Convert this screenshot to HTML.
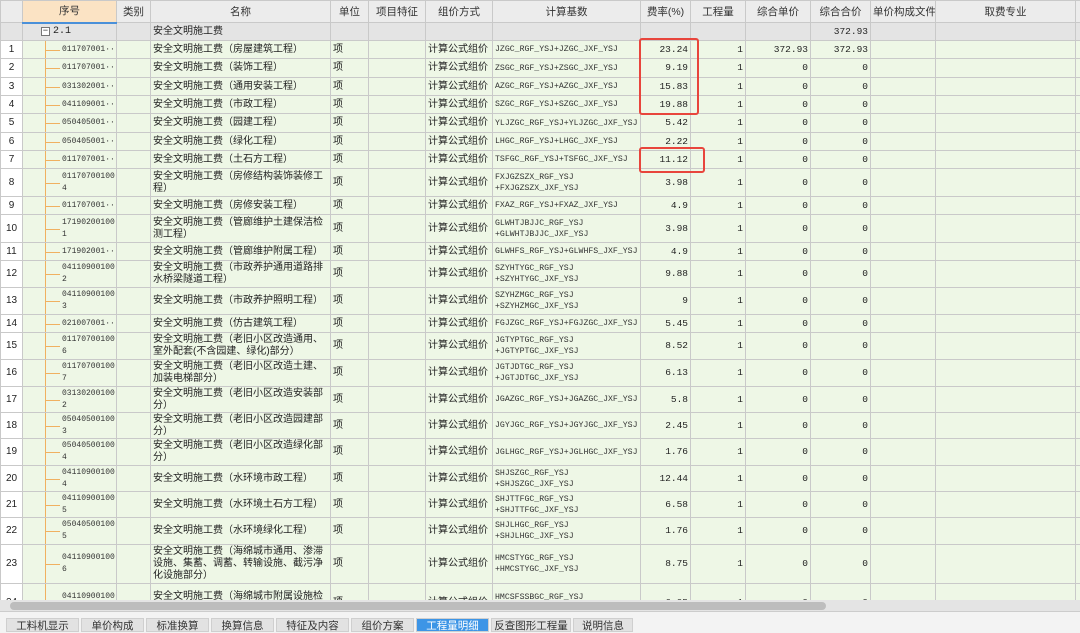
<!DOCTYPE html>
<html><head><meta charset="utf-8"><style>
*{margin:0;padding:0;box-sizing:border-box}
body{width:1080px;height:629px;overflow:hidden;background:#f3f3f3;font-family:"Liberation Sans","Noto Sans CJK SC",sans-serif;font-size:10px;color:#222;position:relative}
#grid{position:absolute;left:0;top:0;width:1080px;height:600px;overflow:hidden;background:#fff}
table{border-collapse:collapse;table-layout:fixed;width:1080px}
td{border:1px solid #c9c9c9;padding:0 2px;line-height:12px;vertical-align:middle;overflow:hidden;white-space:nowrap;background:#eef7e6;font-size:10px}
tr.h td{background:#ececec;text-align:center;height:22px;font-size:10.5px;color:#333}
tr.h td.sx{background:#fbe3c4;border-bottom:2px solid #4a90d9}
tr.g td{background:#e4e4e4;height:18px}
td.n{background:#fff;text-align:center;font-size:10px;padding:0}
td.c{font-family:"Liberation Mono",monospace;font-size:8px;position:relative;padding-left:39px;padding-right:0;color:#333;word-break:break-all}
td.c:before{content:"";position:absolute;left:22px;top:-2px;bottom:-2px;border-left:1px solid #f0b060}
td.c:after{content:"";position:absolute;left:23px;width:14px;top:50%;border-top:1px solid #f0b060}
td.w{white-space:normal}
td.f{font-family:"Liberation Mono",monospace;font-size:8.2px;white-space:normal;line-height:11px;color:#333}
td.r{text-align:right;font-family:"Liberation Mono",monospace;font-size:9.5px}
.box{position:absolute;border:2px solid #e8453c;border-radius:3px}
#sb{position:absolute;left:0;top:600px;width:1080px;height:12px;background:#e4e4e4;border-bottom:1px solid #ccc}
#sb div{position:absolute;left:10px;top:2px;width:816px;height:8px;background:#bdbdbd;border-radius:4px}
.tab{position:absolute;top:618px;height:14px;background:#e2e2e2;border:1px solid #cfcfcf;font-size:10.5px;text-align:center;line-height:14px;color:#333}
</style></head><body>
<div id="grid"><table>
<colgroup><col style="width:22px"><col style="width:94px"><col style="width:34px"><col style="width:180px"><col style="width:38px"><col style="width:57px"><col style="width:67px"><col style="width:148px"><col style="width:50px"><col style="width:55px"><col style="width:65px"><col style="width:60px"><col style="width:65px"><col style="width:140px"><col style="width:5px"></colgroup>
<tr class="h"><td></td><td class="sx">序号</td><td>类别</td><td>名称</td><td>单位</td><td>项目特征</td><td>组价方式</td><td>计算基数</td><td>费率(%)</td><td>工程量</td><td>综合单价</td><td>综合合价</td><td>单价构成文件</td><td>取费专业</td><td></td></tr>
<tr class="g"><td class="n"></td><td style="padding-left:18px;font-family:'Liberation Mono',monospace;font-size:10px"><span style="display:inline-block;width:9px;height:9px;border:1px solid #777;font-size:9px;line-height:6px;text-align:center;margin-right:3px;background:#fff">−</span>2.1</td><td></td><td>安全文明施工费</td><td></td><td></td><td></td><td></td><td></td><td></td><td></td><td class="r">372.93</td><td></td><td></td><td></td></tr>
<tr style="height:18px"><td class="n">1</td><td class="c">011707001···</td><td></td><td>安全文明施工费（房屋建筑工程）</td><td>项</td><td></td><td>计算公式组价</td><td class="f">JZGC_RGF_YSJ+JZGC_JXF_YSJ</td><td class="r">23.24</td><td class="r">1</td><td class="r">372.93</td><td class="r">372.93</td><td></td><td></td><td></td></tr>
<tr style="height:19px"><td class="n">2</td><td class="c">011707001···</td><td></td><td>安全文明施工费（装饰工程）</td><td>项</td><td></td><td>计算公式组价</td><td class="f">ZSGC_RGF_YSJ+ZSGC_JXF_YSJ</td><td class="r">9.19</td><td class="r">1</td><td class="r">0</td><td class="r">0</td><td></td><td></td><td></td></tr>
<tr style="height:18px"><td class="n">3</td><td class="c">031302001···</td><td></td><td>安全文明施工费（通用安装工程）</td><td>项</td><td></td><td>计算公式组价</td><td class="f">AZGC_RGF_YSJ+AZGC_JXF_YSJ</td><td class="r">15.83</td><td class="r">1</td><td class="r">0</td><td class="r">0</td><td></td><td></td><td></td></tr>
<tr style="height:18px"><td class="n">4</td><td class="c">041109001···</td><td></td><td>安全文明施工费（市政工程）</td><td>项</td><td></td><td>计算公式组价</td><td class="f">SZGC_RGF_YSJ+SZGC_JXF_YSJ</td><td class="r">19.88</td><td class="r">1</td><td class="r">0</td><td class="r">0</td><td></td><td></td><td></td></tr>
<tr style="height:19px"><td class="n">5</td><td class="c">050405001···</td><td></td><td>安全文明施工费（园建工程）</td><td>项</td><td></td><td>计算公式组价</td><td class="f">YLJZGC_RGF_YSJ+YLJZGC_JXF_YSJ</td><td class="r">5.42</td><td class="r">1</td><td class="r">0</td><td class="r">0</td><td></td><td></td><td></td></tr>
<tr style="height:18px"><td class="n">6</td><td class="c">050405001···</td><td></td><td>安全文明施工费（绿化工程）</td><td>项</td><td></td><td>计算公式组价</td><td class="f">LHGC_RGF_YSJ+LHGC_JXF_YSJ</td><td class="r">2.22</td><td class="r">1</td><td class="r">0</td><td class="r">0</td><td></td><td></td><td></td></tr>
<tr style="height:18px"><td class="n">7</td><td class="c">011707001···</td><td></td><td>安全文明施工费（土石方工程）</td><td>项</td><td></td><td>计算公式组价</td><td class="f">TSFGC_RGF_YSJ+TSFGC_JXF_YSJ</td><td class="r">11.12</td><td class="r">1</td><td class="r">0</td><td class="r">0</td><td></td><td></td><td></td></tr>
<tr style="height:28px"><td class="n">8</td><td class="c w">011707001004</td><td></td><td class="w">安全文明施工费（房修结构装饰装修工程）</td><td>项</td><td></td><td>计算公式组价</td><td class="f">FXJGZSZX_RGF_YSJ +FXJGZSZX_JXF_YSJ</td><td class="r">3.98</td><td class="r">1</td><td class="r">0</td><td class="r">0</td><td></td><td></td><td></td></tr>
<tr style="height:18px"><td class="n">9</td><td class="c">011707001···</td><td></td><td>安全文明施工费（房修安装工程）</td><td>项</td><td></td><td>计算公式组价</td><td class="f">FXAZ_RGF_YSJ+FXAZ_JXF_YSJ</td><td class="r">4.9</td><td class="r">1</td><td class="r">0</td><td class="r">0</td><td></td><td></td><td></td></tr>
<tr style="height:28px"><td class="n">10</td><td class="c w">171902001001</td><td></td><td class="w">安全文明施工费（管廊维护土建保洁检测工程）</td><td>项</td><td></td><td>计算公式组价</td><td class="f">GLWHTJBJJC_RGF_YSJ +GLWHTJBJJC_JXF_YSJ</td><td class="r">3.98</td><td class="r">1</td><td class="r">0</td><td class="r">0</td><td></td><td></td><td></td></tr>
<tr style="height:18px"><td class="n">11</td><td class="c">171902001···</td><td></td><td>安全文明施工费（管廊维护附属工程）</td><td>项</td><td></td><td>计算公式组价</td><td class="f">GLWHFS_RGF_YSJ+GLWHFS_JXF_YSJ</td><td class="r">4.9</td><td class="r">1</td><td class="r">0</td><td class="r">0</td><td></td><td></td><td></td></tr>
<tr style="height:27px"><td class="n">12</td><td class="c w">041109001002</td><td></td><td class="w">安全文明施工费（市政养护通用道路排水桥梁隧道工程）</td><td>项</td><td></td><td>计算公式组价</td><td class="f">SZYHTYGC_RGF_YSJ +SZYHTYGC_JXF_YSJ</td><td class="r">9.88</td><td class="r">1</td><td class="r">0</td><td class="r">0</td><td></td><td></td><td></td></tr>
<tr style="height:27px"><td class="n">13</td><td class="c w">041109001003</td><td></td><td class="w">安全文明施工费（市政养护照明工程）</td><td>项</td><td></td><td>计算公式组价</td><td class="f">SZYHZMGC_RGF_YSJ +SZYHZMGC_JXF_YSJ</td><td class="r">9</td><td class="r">1</td><td class="r">0</td><td class="r">0</td><td></td><td></td><td></td></tr>
<tr style="height:18px"><td class="n">14</td><td class="c">021007001···</td><td></td><td>安全文明施工费（仿古建筑工程）</td><td>项</td><td></td><td>计算公式组价</td><td class="f">FGJZGC_RGF_YSJ+FGJZGC_JXF_YSJ</td><td class="r">5.45</td><td class="r">1</td><td class="r">0</td><td class="r">0</td><td></td><td></td><td></td></tr>
<tr style="height:27px"><td class="n">15</td><td class="c w">011707001006</td><td></td><td class="w">安全文明施工费（老旧小区改造通用、室外配套(不含园建、绿化)部分）</td><td>项</td><td></td><td>计算公式组价</td><td class="f">JGTYPTGC_RGF_YSJ +JGTYPTGC_JXF_YSJ</td><td class="r">8.52</td><td class="r">1</td><td class="r">0</td><td class="r">0</td><td></td><td></td><td></td></tr>
<tr style="height:27px"><td class="n">16</td><td class="c w">011707001007</td><td></td><td class="w">安全文明施工费（老旧小区改造土建、加装电梯部分）</td><td>项</td><td></td><td>计算公式组价</td><td class="f">JGTJDTGC_RGF_YSJ +JGTJDTGC_JXF_YSJ</td><td class="r">6.13</td><td class="r">1</td><td class="r">0</td><td class="r">0</td><td></td><td></td><td></td></tr>
<tr style="height:26px"><td class="n">17</td><td class="c w">031302001002</td><td></td><td class="w">安全文明施工费（老旧小区改造安装部分）</td><td>项</td><td></td><td>计算公式组价</td><td class="f">JGAZGC_RGF_YSJ+JGAZGC_JXF_YSJ</td><td class="r">5.8</td><td class="r">1</td><td class="r">0</td><td class="r">0</td><td></td><td></td><td></td></tr>
<tr style="height:26px"><td class="n">18</td><td class="c w">050405001003</td><td></td><td class="w">安全文明施工费（老旧小区改造园建部分）</td><td>项</td><td></td><td>计算公式组价</td><td class="f">JGYJGC_RGF_YSJ+JGYJGC_JXF_YSJ</td><td class="r">2.45</td><td class="r">1</td><td class="r">0</td><td class="r">0</td><td></td><td></td><td></td></tr>
<tr style="height:27px"><td class="n">19</td><td class="c w">050405001004</td><td></td><td class="w">安全文明施工费（老旧小区改造绿化部分）</td><td>项</td><td></td><td>计算公式组价</td><td class="f">JGLHGC_RGF_YSJ+JGLHGC_JXF_YSJ</td><td class="r">1.76</td><td class="r">1</td><td class="r">0</td><td class="r">0</td><td></td><td></td><td></td></tr>
<tr style="height:26px"><td class="n">20</td><td class="c w">041109001004</td><td></td><td>安全文明施工费（水环境市政工程）</td><td>项</td><td></td><td>计算公式组价</td><td class="f">SHJSZGC_RGF_YSJ +SHJSZGC_JXF_YSJ</td><td class="r">12.44</td><td class="r">1</td><td class="r">0</td><td class="r">0</td><td></td><td></td><td></td></tr>
<tr style="height:26px"><td class="n">21</td><td class="c w">041109001005</td><td></td><td>安全文明施工费（水环境土石方工程）</td><td>项</td><td></td><td>计算公式组价</td><td class="f">SHJTTFGC_RGF_YSJ +SHJTTFGC_JXF_YSJ</td><td class="r">6.58</td><td class="r">1</td><td class="r">0</td><td class="r">0</td><td></td><td></td><td></td></tr>
<tr style="height:27px"><td class="n">22</td><td class="c w">050405001005</td><td></td><td>安全文明施工费（水环境绿化工程）</td><td>项</td><td></td><td>计算公式组价</td><td class="f">SHJLHGC_RGF_YSJ +SHJLHGC_JXF_YSJ</td><td class="r">1.76</td><td class="r">1</td><td class="r">0</td><td class="r">0</td><td></td><td></td><td></td></tr>
<tr style="height:39px"><td class="n">23</td><td class="c w">041109001006</td><td></td><td class="w">安全文明施工费（海绵城市通用、渗滞设施、集蓄、调蓄、转输设施、截污净化设施部分）</td><td>项</td><td></td><td>计算公式组价</td><td class="f">HMCSTYGC_RGF_YSJ +HMCSTYGC_JXF_YSJ</td><td class="r">8.75</td><td class="r">1</td><td class="r">0</td><td class="r">0</td><td></td><td></td><td></td></tr>
<tr style="height:39px"><td class="n">24</td><td class="c w">041109001007</td><td></td><td class="w">安全文明施工费（海绵城市附属设施检修维护部分）</td><td>项</td><td></td><td>计算公式组价</td><td class="f">HMCSFSSBGC_RGF_YSJ +HMCSFSSBGC_JXF_YSJ</td><td class="r">6.05</td><td class="r">1</td><td class="r">0</td><td class="r">0</td><td></td><td></td><td></td></tr>
</table></div>
<div class="box" style="left:639px;top:38px;width:60px;height:77px"></div>
<div class="box" style="left:639px;top:147px;width:66px;height:26px"></div>
<div id="sb"><div></div></div>
<div class="tab" style="left:6px;width:73px">工料机显示</div>
<div class="tab" style="left:81px;width:63px">单价构成</div>
<div class="tab" style="left:146px;width:63px">标准换算</div>
<div class="tab" style="left:211px;width:63px">换算信息</div>
<div class="tab" style="left:276px;width:73px">特征及内容</div>
<div class="tab" style="left:351px;width:63px">组价方案</div>
<div class="tab" style="left:416px;width:73px;background:#3d95e6;color:#fff">工程量明细</div>
<div class="tab" style="left:491px;width:80px">反查图形工程量</div>
<div class="tab" style="left:573px;width:60px">说明信息</div>
</body></html>
